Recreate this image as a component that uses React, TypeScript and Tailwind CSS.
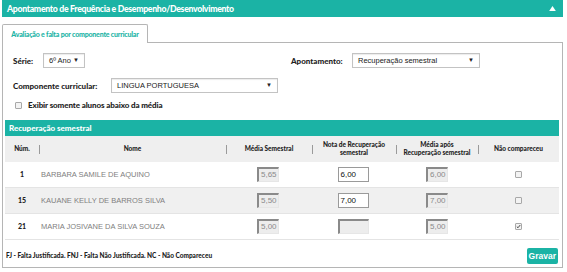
import React from "react"

const teal = "bg-[#1bb3a5]"

type Row = {
  num: string
  nome: string
  media: string
  nota: string
  apos: string
  nc: boolean
  shaded: boolean
}

const rows: Row[] = [
  { num: "1", nome: "BARBARA SAMILE DE AQUINO", media: "5,65", nota: "6,00", apos: "6,00", nc: false, shaded: false },
  { num: "15", nome: "KAUANE KELLY DE BARROS SILVA", media: "5,50", nota: "7,00", apos: "7,00", nc: false, shaded: true },
  { num: "21", nome: "MARIA JOSIVANE DA SILVA SOUZA", media: "5,00", nota: "", apos: "5,00", nc: true, shaded: false },
]

const cols = "grid grid-cols-[34px_187px_86px_84px_82px_81px]"

function Select({ value, className }: { value: string; className: string }) {
  return (
    <div
      className={`flex h-[15px] items-center justify-between border border-[#c3c3c3] bg-white px-[5px] font-['Liberation_Sans',sans-serif] text-[7.5px] text-[#222] shadow-[inset_0_1px_1px_rgba(0,0,0,0.08)] ${className}`}
    >
      <span>{value}</span>
      <span className="text-[6px]">▼</span>
    </div>
  )
}

function HeadCell({ children, sep }: { children: React.ReactNode; sep?: boolean }) {
  return (
    <div className="relative flex items-center justify-center text-center leading-[8px]">
      {sep && <span className="absolute left-0 top-[9px] h-[9px] w-px bg-[#9a9a9a]" />}
      {children}
    </div>
  )
}

function Box({ value, readOnly, w }: { value: string; readOnly: boolean; w: string }) {
  return (
    <div
      className={`flex h-[15px] items-center px-[2px] font-['Liberation_Sans',sans-serif] text-[8px] ${w} ${
        readOnly
          ? "border-l-2 border-t-2 border-r border-b border-l-[#8a8a8a] border-t-[#8a8a8a] border-r-[#e6e6e6] border-b-[#e6e6e6] bg-[#ededed] text-[#8a8a8a]"
          : "border border-[#9a9a9a] bg-white text-[#111]"
      }`}
    >
      {value}
    </div>
  )
}

function Check({ checked }: { checked: boolean }) {
  return (
    <span className="flex h-[7px] w-[7px] items-center justify-center rounded-[1px] border border-[#a8a8a8] bg-[#f3f3f3]">
      {checked && (
        <svg viewBox="0 0 8 8" className="h-[7px] w-[7px]">
          <path d="M1.3 4.2 L3.2 6 L6.8 1.6" fill="none" stroke="#333" strokeWidth="1.4" />
        </svg>
      )}
    </span>
  )
}

export default function App() {
  return (
    <div className="h-[272px] w-[567px] bg-white px-[2px] font-['Lato',sans-serif]">
      {/* Panel header */}
      <div className={`flex h-[17px] w-[561px] items-center justify-between ${teal} px-[5px] text-white`}>
        <span className="text-[8.7px] font-black tracking-[-0.3px]">
          Apontamento de Frequência e Desempenho/Desenvolvimento
        </span>
        <svg viewBox="0 0 8 6" className="mr-[2px] h-[5px] w-[7px]">
          <path d="M0 6 L4 0 L8 6 Z" fill="white" />
        </svg>
      </div>

      {/* Tab */}
      <div className="mt-[7px] flex">
        <div className="relative z-10 -mb-px flex h-[19px] w-[146px] items-center justify-center whitespace-nowrap rounded-t-[2px] border border-b-0 border-[#b5b5b5] bg-white text-[7px] font-black tracking-[-0.2px] text-[#1bb3a5]">
          Avaliação e falta por componente curricular
        </div>
      </div>

      {/* Tab content */}
      <div className="h-[226px] w-[561px] border border-[#b5b5b5] px-[2px] pt-[10px] text-[#222]">
        <div className="flex items-center pl-[8px]">
          <span className="w-[30px] text-[8px] font-black">Série:</span>
          <Select value="6º Ano" className="w-[42px]" />
          <span className="ml-[206px] w-[61px] text-[8px] font-black">Apontamento:</span>
          <Select value="Recuperação semestral" className="w-[128px]" />
        </div>
        <div className="mt-[10px] flex items-center pl-[8px]">
          <span className="w-[98px] text-[8px] font-black">Componente curricular:</span>
          <Select value="LINGUA PORTUGUESA" className="w-[167px]" />
        </div>
        <div className="mt-[6px] flex items-center gap-[6px] pl-[10px]">
          <Check checked={false} />
          <span className="text-[8px] font-black tracking-[-0.1px]">Exibir somente alunos abaixo da média</span>
        </div>

        {/* Recuperação semestral */}
        <div className="mt-[9px] w-[554px]">
          <div className={`flex h-[16px] items-center ${teal} px-[4px] text-[8px] font-black text-white`}>
            Recuperação semestral
          </div>
          <div className={`${cols} h-[26px] bg-[#efefef] text-[6.5px] font-black text-[#222]`}>
            <HeadCell>Núm.</HeadCell>
            <HeadCell sep>Nome</HeadCell>
            <HeadCell sep>Média Semestral</HeadCell>
            <HeadCell sep>
              Nota de Recuperação
              <br />
              semestral
            </HeadCell>
            <HeadCell sep>
              Média após
              <br />
              Recuperação semestral
            </HeadCell>
            <HeadCell sep>Não compareceu</HeadCell>
          </div>
          {rows.map((r) => (
            <div
              key={r.num}
              className={`${cols} h-[26px] items-center border-b border-[#e4e4e4] ${r.shaded ? "bg-[#f0f0f0]" : "bg-white"}`}
            >
              <div className="text-center text-[7px] font-black">{r.num}</div>
              <div className="pl-[2px] font-['Liberation_Sans',sans-serif] text-[7.5px] text-[#808080]">{r.nome}</div>
              <div className="flex justify-center pr-[2px]">
                <Box value={r.media} readOnly w="w-[22px]" />
              </div>
              <div className="flex justify-center pr-[2px]">
                <Box value={r.nota} readOnly={r.nc} w="w-[31px]" />
              </div>
              <div className="flex justify-center">
                <Box value={r.apos} readOnly w="w-[22px]" />
              </div>
              <div className="flex justify-center">
                <Check checked={r.nc} />
              </div>
            </div>
          ))}
          <div className="mt-[8px] flex items-center justify-between">
            <span className="pl-[1px] text-[6.5px] font-black text-[#222]">
              FJ - Falta Justificada. FNJ - Falta Não Justificada. NC - Não Compareceu
            </span>
            <button className={`mr-[1px] h-[16px] rounded-[2px] ${teal} px-[2px] font-['Liberation_Sans',sans-serif] text-[8.5px] font-bold text-white`}>
              Gravar
            </button>
          </div>
        </div>
      </div>
    </div>
  )
}
